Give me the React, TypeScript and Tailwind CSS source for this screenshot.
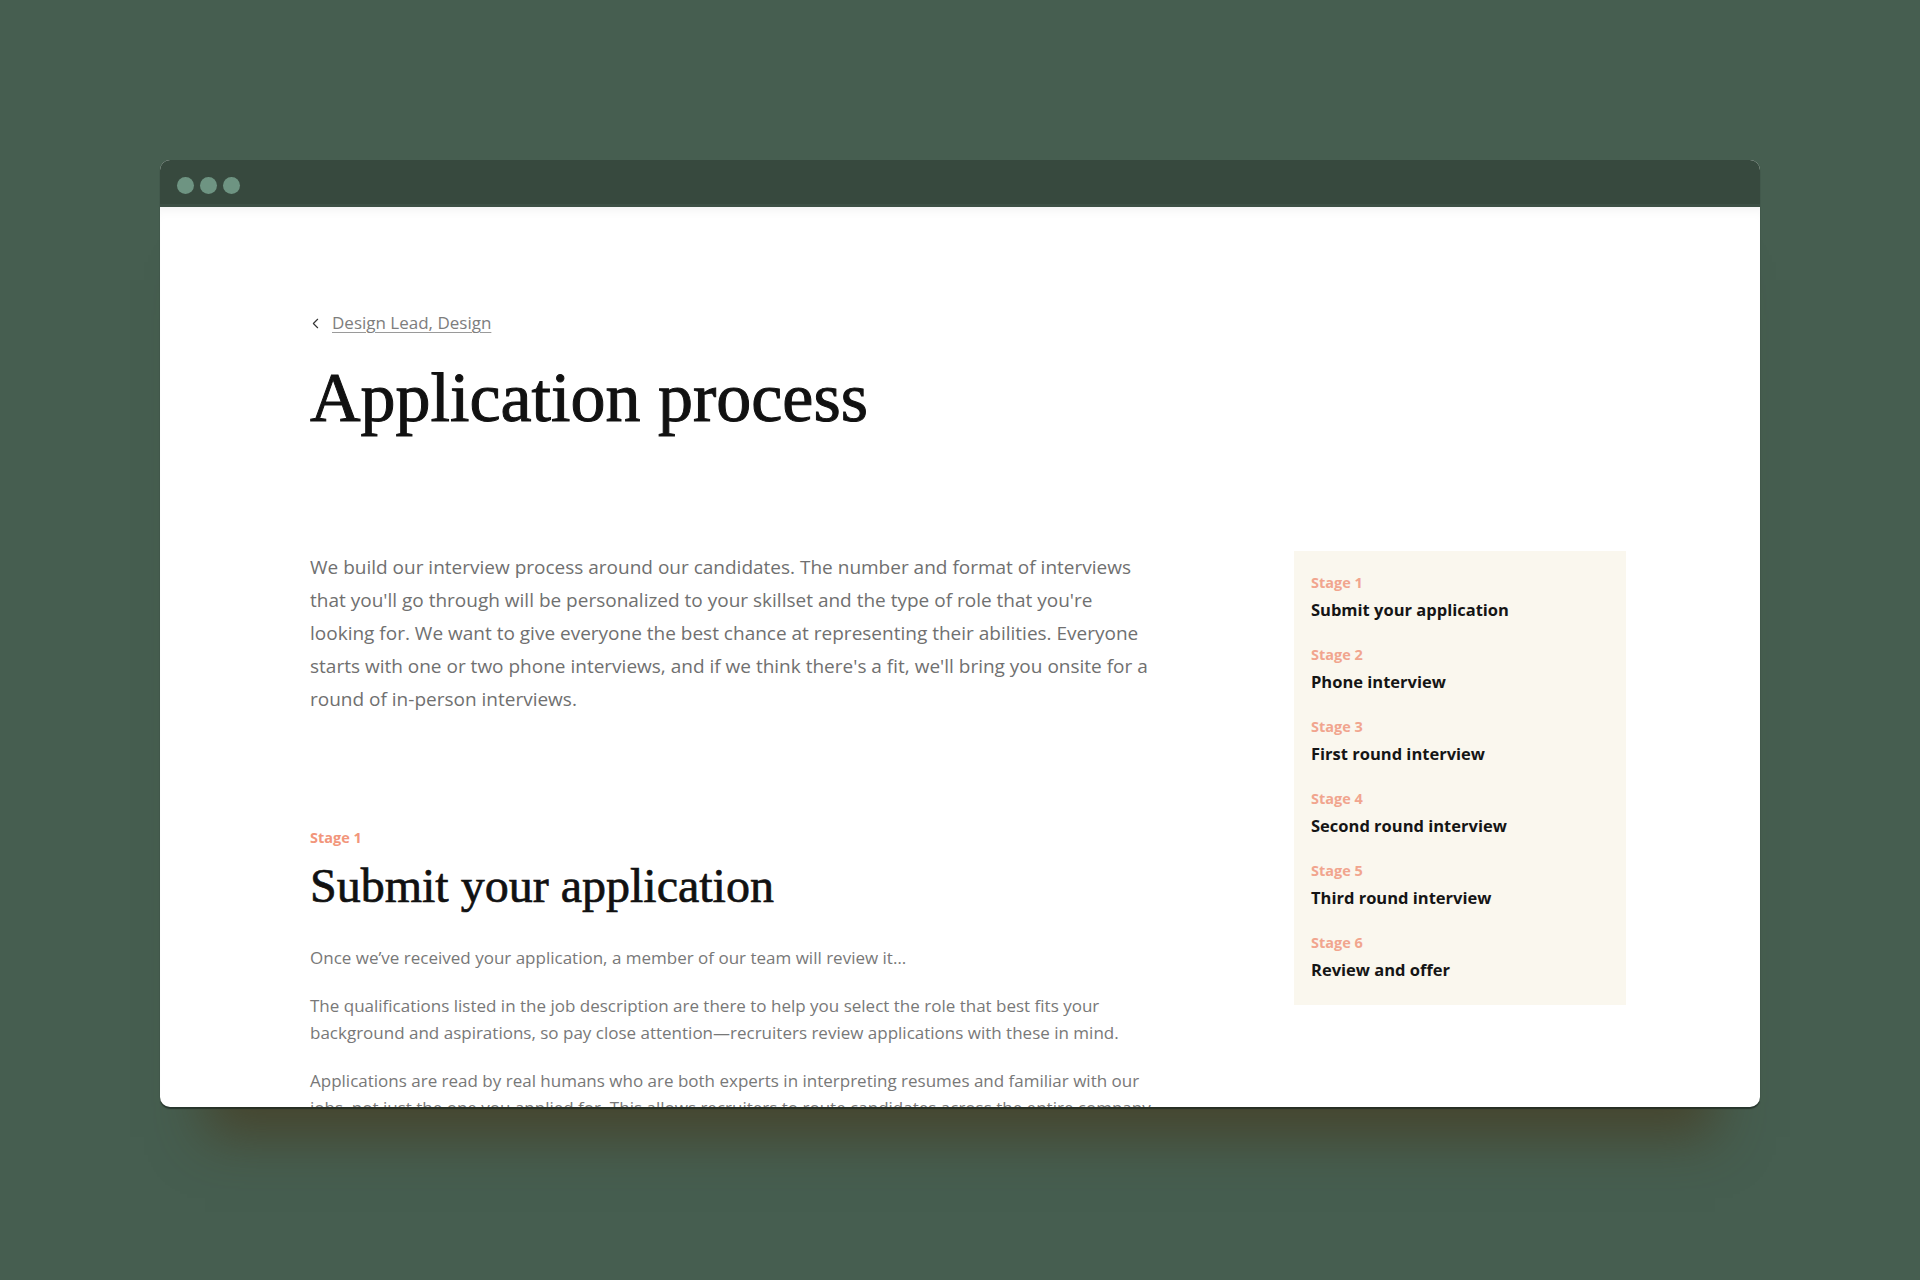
import React from "react";
import { ChevronLeft } from "lucide-react";

const stages = [
  "Submit your application",
  "Phone interview",
  "First round interview",
  "Second round interview",
  "Third round interview",
  "Review and offer",
];

const sans = "font-['Open_Sans','Liberation_Sans',sans-serif]";
const serif = "font-['Liberation_Serif','Times_New_Roman',serif]";

export default function App() {
  return (
    <div className="min-h-screen w-full bg-[#465e50] pt-[160px] pl-[160px]">
      {/* Browser window */}
      <div className="w-[1600px] h-[947px] flex flex-col rounded-[10px] overflow-hidden bg-white shadow-[0_2px_1px_rgba(20,30,25,0.6),0_75px_50px_-45px_rgba(70,58,32,0.7)]">
        {/* Title bar */}
        <div className="h-[47px] shrink-0 bg-[#37493e] border-b-[3px] border-[#3d5045] flex items-center pl-[17px] pt-[7px] gap-[6px]">
          <span className="w-[17px] h-[17px] rounded-full bg-[#6e9482]" />
          <span className="w-[17px] h-[17px] rounded-full bg-[#6e9482]" />
          <span className="w-[17px] h-[17px] rounded-full bg-[#6e9482]" />
        </div>

        {/* Page */}
        <div className="flex-1 overflow-hidden pl-[150px] pt-[104px] shadow-[inset_0_10px_14px_-10px_rgba(0,0,0,0.08)]">
          <a className={`flex items-center gap-[8px] h-[24px] text-[17px] text-[#7d7d7d] ${sans}`}>
            <ChevronLeft size={17} strokeWidth={1.6} className="text-[#333] -ml-[3px]" />
            <span className="underline underline-offset-[3px] decoration-[#9a9a9a]">Design Lead, Design</span>
          </a>

          <h1 className={`mt-[28px] text-[70px] leading-[70px] text-[#111] [-webkit-text-stroke:1px_#111] ${serif}`}>
            Application process
          </h1>

          <div className="mt-[118px] flex">
            {/* Main column */}
            <div className="w-[984px] shrink-0">
              <p className={`text-[19px] leading-[33px] text-[#707070] whitespace-nowrap ${sans}`}>
                We build our interview process around our candidates. The number and format of interviews
                <br />
                that you'll go through will be personalized to your skillset and the type of role that you're
                <br />
                looking for. We want to give everyone the best chance at representing their abilities. Everyone
                <br />
                starts with one or two phone interviews, and if we think there's a fit, we'll bring you onsite for a
                <br />
                round of in-person interviews.
              </p>

              <div className={`mt-[112px] text-[14.5px] leading-[20px] font-bold text-[#f2967b] ${sans}`}>Stage 1</div>
              <h2 className={`mt-[11px] text-[48px] leading-[53px] text-[#111] [-webkit-text-stroke:0.7px_#111] ${serif}`}>
                Submit your application
              </h2>

              <div className={`mt-[32px] flex flex-col gap-[21px] text-[17px] leading-[27px] text-[#787878] whitespace-nowrap ${sans}`}>
                <p>Once we’ve received your application, a member of our team will review it…</p>
                <p>
                  The qualifications listed in the job description are there to help you select the role that best fits your
                  <br />
                  background and aspirations, so pay close attention—recruiters review applications with these in mind.
                </p>
                <p>
                  Applications are read by real humans who are both experts in interpreting resumes and familiar with our
                  <br />
                  jobs, not just the one you applied for. This allows recruiters to route candidates across the entire company.
                </p>
              </div>
            </div>

            {/* Stage index */}
            <aside className={`w-[332px] shrink-0 self-start bg-[#faf7ee] pl-[17px] pr-4 pt-[22px] pb-[23px] flex flex-col gap-[23px] ${sans}`}>
              {stages.map((title, i) => (
                <div key={title} className="flex flex-col gap-[5px]">
                  <span className="text-[14.5px] leading-[20px] font-bold text-[#f1a58e]">Stage {i + 1}</span>
                  <span className="text-[16.5px] leading-[24px] font-bold text-[#151515]">{title}</span>
                </div>
              ))}
            </aside>
          </div>
        </div>
      </div>
    </div>
  );
}
